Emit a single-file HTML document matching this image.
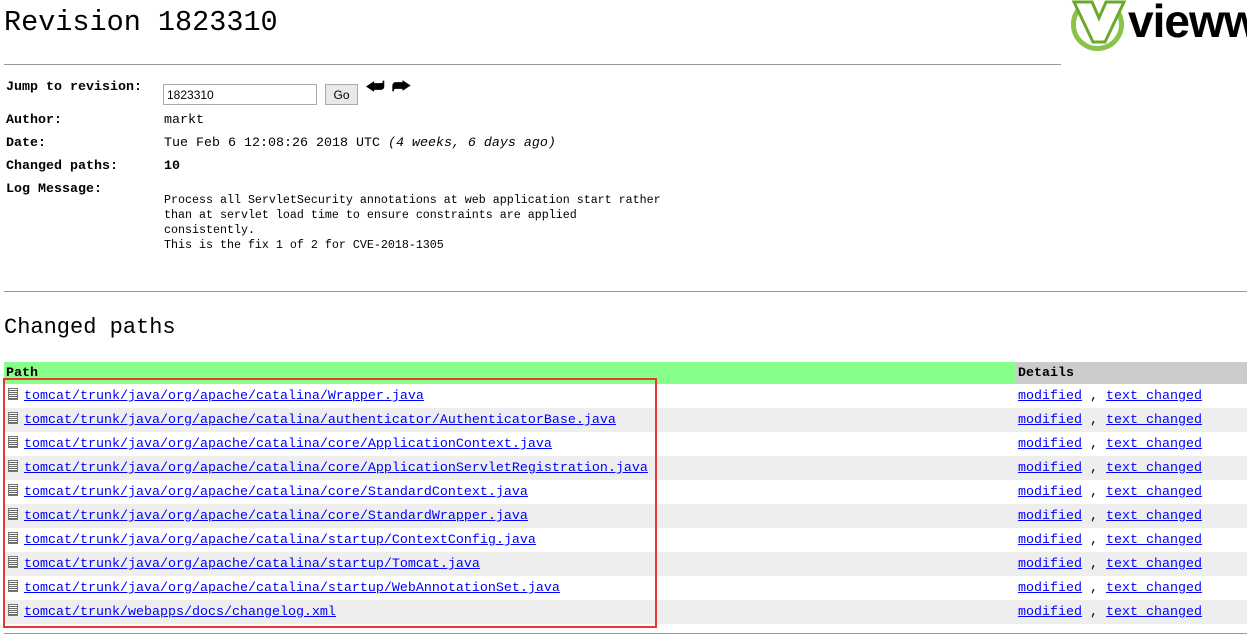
<!DOCTYPE html>
<html><head><meta charset="utf-8"><style>
body{margin:0;width:1247px;height:638px;overflow:hidden;background:#fff;font-family:"Liberation Mono",monospace;color:#000;position:relative}
.a{position:absolute;white-space:pre}
h1{position:absolute;left:4px;top:5px;margin:0;font-weight:normal;font-size:28.5px;line-height:36px;font-family:"Liberation Mono",monospace}
.hr{position:absolute;height:1px;background:#999}
.lbl{position:absolute;left:6px;font-weight:bold;font-size:13.33px}
.val{position:absolute;left:164px;font-size:13.33px}
.log{position:absolute;left:164px;top:193px;font-size:11.67px;line-height:15px;white-space:pre}
table{position:absolute;left:4px;top:362px;border-collapse:collapse;width:1243px;font-size:13.33px}
td,th{padding:0 2px;height:24px;text-align:left;white-space:nowrap}
th{height:22px;font-weight:bold}
tr:nth-child(odd) td{background:#eee}
a{color:#00f}
.ic{display:inline-block;width:10px;height:12px;border:1px solid #777;margin:0 6px 0 2px;vertical-align:-1px;background:repeating-linear-gradient(#fff 0 1px,#666 1px 2px);box-sizing:border-box}
.box{position:absolute;left:3px;top:378px;width:650px;height:246px;border:2px solid #e53935}
</style></head><body>
<h1>Revision 1823310</h1>
<svg class="a" style="left:1066px;top:0" width="181" height="56"><path d="M44 4A24 24 0 1 1 14 8" fill="none" stroke="#8bc34a" stroke-width="5"/><path d="M8 2h18l7 16 7-16h18l-19 40h-12z" fill="#fff" stroke="#6aaa2a" stroke-width="3"/><text x="62" y="37" font-family="Liberation Sans" font-weight="bold" font-size="46" fill="#000" letter-spacing="-1">vieww</text></svg>
<div class="hr" style="left:4px;top:64px;width:1057px"></div>
<div class="lbl" style="top:80px">Jump to revision:</div>
<div class="a" style="left:163px;top:84px;width:154px;height:21px;border:1px solid #aaa;font:12px 'Liberation Sans',sans-serif;line-height:21px;padding-left:3px;box-sizing:border-box">1823310</div>
<div class="a" style="left:325px;top:84px;width:33px;height:21px;border:1px solid #aaa;background:#e8e8e8;font:12px 'Liberation Sans',sans-serif;line-height:20px;text-align:center;box-sizing:border-box">Go</div>
<div class="a" style="left:366px;top:76px;font-size:20px;font-weight:bold">⮨</div>
<div class="a" style="left:392px;top:76px;font-size:20px;font-weight:bold">⮫</div>
<div class="lbl" style="top:113px">Author:</div><div class="val" style="top:113px">markt</div>
<div class="lbl" style="top:136px">Date:</div><div class="val" style="top:136px">Tue Feb 6 12:08:26 2018 UTC <i>(4 weeks, 6 days ago)</i></div>
<div class="lbl" style="top:159px">Changed paths:</div><div class="val" style="top:159px;font-weight:bold">10</div>
<div class="lbl" style="top:182px">Log Message:</div>
<div class="log">Process all ServletSecurity annotations at web application start rather
than at servlet load time to ensure constraints are applied
consistently.
This is the fix 1 of 2 for CVE-2018-1305</div>
<div class="hr" style="left:4px;top:291px;width:1243px"></div>
<div class="a" style="left:4px;top:315px;font-size:22px">Changed paths</div>
<table>
<tr><th style="background:#8f8;width:1008px">Path</th><th style="background:#ccc">Details</th></tr>
<tr><td><span class="ic"></span><a href="#">tomcat/trunk/java/org/apache/catalina/Wrapper.java</a></td><td><a href="#">modified</a> , <a href="#">text changed</a></td></tr>
<tr><td><span class="ic"></span><a href="#">tomcat/trunk/java/org/apache/catalina/authenticator/AuthenticatorBase.java</a></td><td><a href="#">modified</a> , <a href="#">text changed</a></td></tr>
<tr><td><span class="ic"></span><a href="#">tomcat/trunk/java/org/apache/catalina/core/ApplicationContext.java</a></td><td><a href="#">modified</a> , <a href="#">text changed</a></td></tr>
<tr><td><span class="ic"></span><a href="#">tomcat/trunk/java/org/apache/catalina/core/ApplicationServletRegistration.java</a></td><td><a href="#">modified</a> , <a href="#">text changed</a></td></tr>
<tr><td><span class="ic"></span><a href="#">tomcat/trunk/java/org/apache/catalina/core/StandardContext.java</a></td><td><a href="#">modified</a> , <a href="#">text changed</a></td></tr>
<tr><td><span class="ic"></span><a href="#">tomcat/trunk/java/org/apache/catalina/core/StandardWrapper.java</a></td><td><a href="#">modified</a> , <a href="#">text changed</a></td></tr>
<tr><td><span class="ic"></span><a href="#">tomcat/trunk/java/org/apache/catalina/startup/ContextConfig.java</a></td><td><a href="#">modified</a> , <a href="#">text changed</a></td></tr>
<tr><td><span class="ic"></span><a href="#">tomcat/trunk/java/org/apache/catalina/startup/Tomcat.java</a></td><td><a href="#">modified</a> , <a href="#">text changed</a></td></tr>
<tr><td><span class="ic"></span><a href="#">tomcat/trunk/java/org/apache/catalina/startup/WebAnnotationSet.java</a></td><td><a href="#">modified</a> , <a href="#">text changed</a></td></tr>
<tr><td><span class="ic"></span><a href="#">tomcat/trunk/webapps/docs/changelog.xml</a></td><td><a href="#">modified</a> , <a href="#">text changed</a></td></tr>
</table>
<div class="box"></div>
<div class="hr" style="left:4px;top:633px;width:1243px"></div>
</body></html>
